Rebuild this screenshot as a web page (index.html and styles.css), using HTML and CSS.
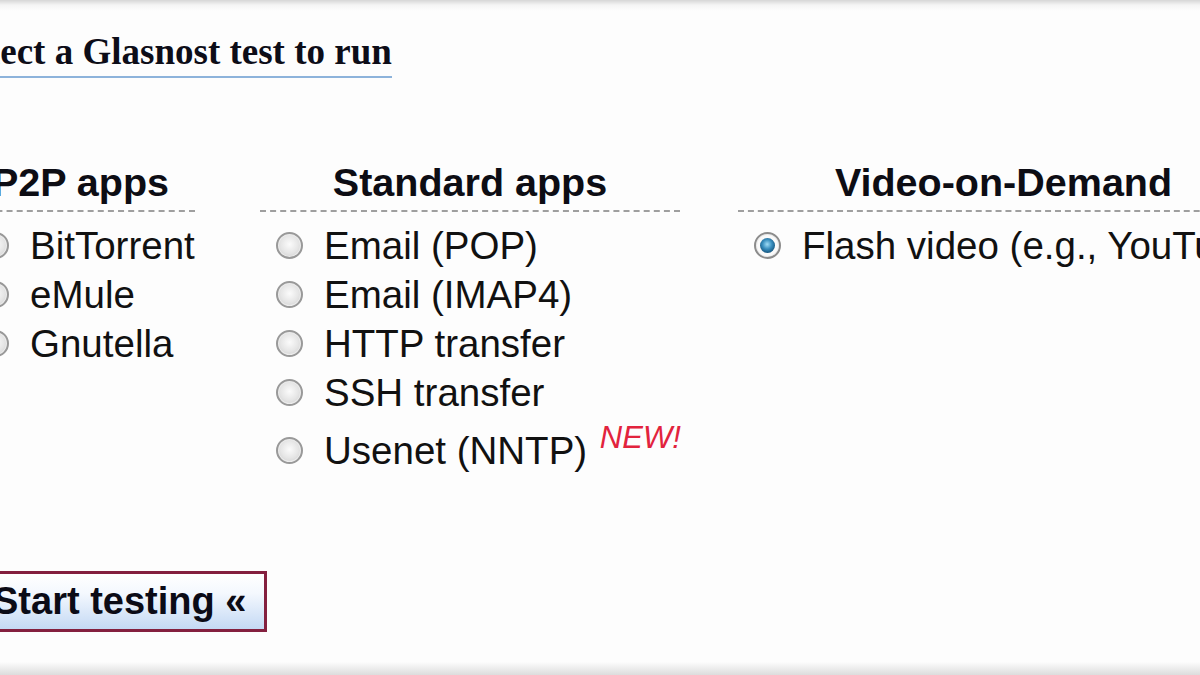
FILE: index.html
```html
<!DOCTYPE html>
<html lang="en">

<head>
    <meta charset="UTF-8">
    <title>Glasnost</title>
    <link rel="stylesheet" href="styles.css">
</head>

<body>
    <div class="page">
        <h1 class="title">Select a Glasnost test to run</h1>
        <div class="tests">
            <div class="group group-p2p">
                <h2 class="group-title">P2P apps</h2>
                <ul class="opts">
                    <li class="opt"><span class="radio"></span><span class="label">BitTorrent</span></li>
                    <li class="opt"><span class="radio"></span><span class="label">eMule</span></li>
                    <li class="opt"><span class="radio"></span><span class="label">Gnutella</span></li>
                </ul>
            </div>
            <div class="group group-std">
                <h2 class="group-title">Standard apps</h2>
                <ul class="opts">
                    <li class="opt"><span class="radio"></span><span class="label">Email (POP)</span></li>
                    <li class="opt"><span class="radio"></span><span class="label">Email (IMAP4)</span></li>
                    <li class="opt"><span class="radio"></span><span class="label">HTTP transfer</span></li>
                    <li class="opt"><span class="radio"></span><span class="label">SSH transfer</span></li>
                    <li class="opt opt-new"><span class="radio"></span><span class="label">Usenet (NNTP) <sup class="new">NEW!</sup></span></li>
                </ul>
            </div>
            <div class="group group-vod">
                <h2 class="group-title">Video-on-Demand</h2>
                <ul class="opts">
                    <li class="opt"><span class="radio checked"></span><span class="label">Flash video (e.g., YouTube)</span></li>
                </ul>
            </div>
        </div>
        <button class="start" type="button">Start testing &laquo;</button>
    </div>
</body>

</html>
```

FILE: styles.css
```css
* {
    padding: 0px;
    margin: 0px;
    box-sizing: border-box;
}

html {
    background: linear-gradient(to bottom, #d6d6d6 0px, #f4f4f4 5px, #fdfdfd 11px, #fdfdfd 662px, #eeeeee 668px, #dcdcdc 675px);
    height: 675px;
}

body {
    height: 675px;
    overflow: hidden;
    font-family: "Liberation Sans", Arial, sans-serif;
    color: #111;
}

.page {
    margin-left: -47px;
    width: 1400px;
}

.title {
    display: block;
    width: fit-content;
    margin-top: 32px;
    padding-bottom: 4px;
    border-bottom: 2px solid #8db3db;
    font: bold 37px/40px "Liberation Serif", "Times New Roman", serif;
    color: #0d0d18;
}

.tests {
    display: flex;
    align-items: flex-start;
    margin-top: 82px;
}

.group {
    flex-shrink: 0;
}

.group-p2p {
    width: 229px;
    margin-left: 13px;
}

.group-std {
    width: 420px;
    margin-left: 65px;
}

.group-vod {
    width: 531px;
    margin-left: 58px;
}

.group-title {
    font-size: 39.5px;
    line-height: 44px;
    font-weight: bold;
    text-align: center;
    padding-bottom: 6px;
    border-bottom: 2px dashed #9f9f9f;
    color: #0d0d14;
}

.opts {
    list-style: none;
    padding: 9px 0 0 16px;
}

.opt {
    display: flex;
    align-items: center;
    height: 49px;
    font-size: 38.5px;
    line-height: 49px;
    white-space: nowrap;
}

.opt-new {
    margin-top: 9px;
}

.radio {
    flex-shrink: 0;
    width: 27px;
    height: 27px;
    margin-right: 21px;
    border-radius: 50%;
    border: 2px solid #999;
    background: radial-gradient(circle at 50% 45%, #fbfbfb 0, #e6e6e6 50%, #c9c9c9 100%);
    box-shadow: inset 0 0 0 1px #ececec;
    position: relative;
}

.radio.checked {
    border-color: #8c8c8c;
    background: #fafafa;
}

.radio.checked::after {
    content: "";
    position: absolute;
    left: 4px;
    top: 4px;
    width: 15px;
    height: 15px;
    border-radius: 50%;
    background: radial-gradient(circle at 48% 42%, #9fdcf6 0, #3a8fbf 40%, #15557e 75%, #0c3350 100%);
}

.new {
    font-size: 31px;
    line-height: 0;
    font-style: italic;
    vertical-align: 16px;
    color: #e2233d;
    margin-left: 2px;
}

.start {
    display: block;
    margin: 96px 0 0 23px;
    height: 61px;
    padding: 6px 18px 6px 14px;
    border: 3px solid #84203f;
    background: linear-gradient(to bottom, #ffffff 0%, #f4f8fe 35%, #c4d9f4 100%);
    font: bold 38px/43px "Liberation Sans", Arial, sans-serif;
    color: #0b0b16;
    cursor: pointer;
}
```
